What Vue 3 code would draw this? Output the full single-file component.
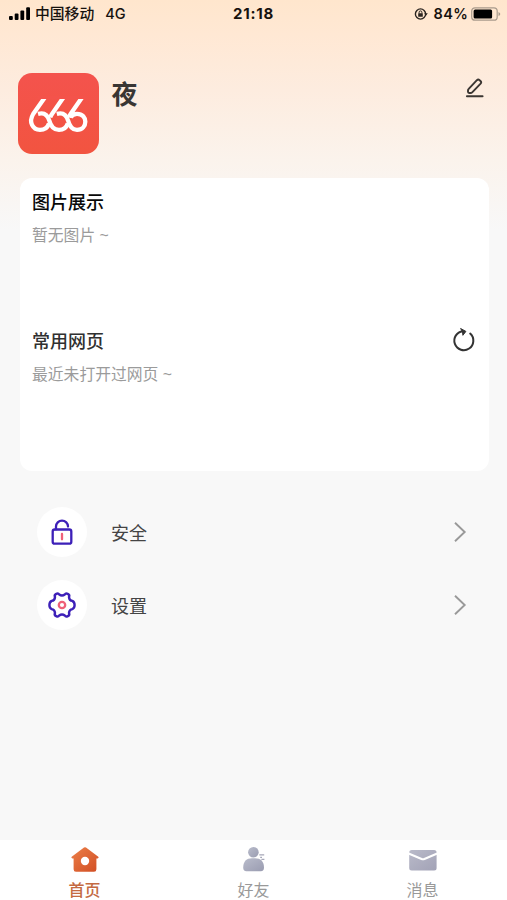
<template>
  <div class="page">
    <header class="status-bar">
      <div class="carrier">
        <svg class="signal" width="22" height="14" viewBox="0 0 22 14">
          <rect x="0" y="9" width="3.8" height="4" rx="1" />
          <rect x="5.7" y="6.5" width="3.8" height="6.5" rx="1" />
          <rect x="11.4" y="3.5" width="3.8" height="9.5" rx="1" />
          <rect x="17.2" y="0.3" width="3.8" height="12.7" rx="1" />
        </svg>
        <span>中国移动</span>
        <span class="network">4G</span>
      </div>
      <div class="clock">21:18</div>
      <div class="power">
        <svg width="14" height="14" viewBox="0 0 14 14">
          <circle cx="6.5" cy="7" r="5.1" fill="none" stroke="#2b2520" stroke-width="1.4" />
          <path d="M10.2 6.2h3.6l-1.8 2.6z" fill="#2b2520" />
          <rect x="4.2" y="6.3" width="4.6" height="3.5" rx=".5" fill="#2b2520" />
          <path d="M5.1 6.5V5.3a1.4 1.4 0 0 1 2.8 0v1.2" fill="none" stroke="#2b2520" />
        </svg>
        <span class="percent">84%</span>
        <svg width="30" height="15" viewBox="0 0 30 15">
          <rect x="0.7" y="0.8" width="25.5" height="12.4" rx="3.3" fill="none" stroke="#a99b8c" stroke-width="1.2" />
          <rect x="2.6" y="2.6" width="18.5" height="8.8" rx="1.5" />
          <path d="M27.5 4.9v4.2q1.8-.7 1.8-2.1t-1.8-2.1z" fill="#a99b8c" />
        </svg>
      </div>
    </header>

    <section class="profile">
      <svg class="avatar" width="81" height="81" viewBox="0 0 81 81">
        <defs>
          <linearGradient id="avatarBg" x1="0" y1="0" x2="0" y2="1">
            <stop offset="0" stop-color="#f4534d" />
            <stop offset="1" stop-color="#f25440" />
          </linearGradient>
        </defs>
        <rect width="81" height="81" rx="14" fill="url(#avatarBg)" />
        <g fill="none" stroke="#fff" stroke-width="4.3">
          <path d="M27 24.2L15.2 41C10.4 49 14.6 56.9 22 56.9C26.6 56.9 29.6 54.6 31 50.5" />
          <path d="M20 40.9C25.5 39.4 29.6 41.6 31.3 47.6C33 54 36 56.9 41 56.9C45.5 56.9 48.4 54.6 49.8 50.5" />
          <path d="M45.6 24.2L34 41Q32.6 43 32.2 44.6" />
          <path d="M38.8 40.9C44.3 39.4 48.4 41.6 50.1 47.6C51.8 54 54.6 56.9 59 56.9C70 56.9 70.2 40.8 59 40.8C56 40.8 53.8 42.2 52.5 44.6" />
          <path d="M64.2 24.2L52.6 41Q51.2 43 50.8 44.6" />
        </g>
        <path d="M20 23H68V26H20z" fill="#f4534b" />
      </svg>
      <h1 class="name">夜</h1>
      <svg class="edit" width="20" height="22" viewBox="0 0 20 22">
        <g fill="none" stroke="#3b3632" stroke-width="1.9" stroke-linejoin="round" stroke-linecap="round">
          <path d="M3.7 10.9L11.9 2.2Q13.2 1 14.6 2.2L15.5 3Q16.8 4.3 15.6 5.7L7.2 14.3Q6.5 15 5.5 15H4.1Q3 15 3 13.8V12.6Q3 11.6 3.7 10.9z" />
          <path d="M1.9 18.2H17.6" />
        </g>
      </svg>
    </section>

    <main class="card">
      <section class="block">
        <h2 class="title strong">图片展示</h2>
        <p class="empty">暂无图片 ~</p>
      </section>
      <section class="block">
        <h2 class="title">常用网页</h2>
        <p class="empty">最近未打开过网页 ~</p>
        <svg class="refresh" width="24" height="26" viewBox="0 0 24 26">
          <path d="M18.2 6.6A9.5 9.5 0 1 1 10.8 4.2" fill="none" stroke="#333" stroke-width="2" stroke-linecap="round" />
          <path d="M8.6 1.5L13.9 4.4L10.9 8.3L10.5 4.8z" fill="#333" stroke="#333" stroke-linejoin="round" />
        </svg>
      </section>
    </main>

    <ul class="menu">
      <li v-for="item in menu" :key="item.key" class="menu-item">
        <span class="menu-icon">
          <svg v-if="item.key === 'safe'" width="28" height="28" viewBox="0 0 28 28" fill="none" stroke-linecap="round">
            <rect x="4.7" y="11.5" width="18.6" height="14.2" rx="2" stroke="#3d20b8" stroke-width="2.3" />
            <path d="M8 11.3V8.6A6 6 0 0 1 20 8.6" stroke="#3d20b8" stroke-width="2.3" />
            <path d="M14 15.9v5.4" stroke="#ef6079" stroke-width="2.3" />
          </svg>
          <svg v-else width="28" height="28" viewBox="0 0 28 28" fill="none" stroke-linejoin="round">
            <path d="M8.2 2.9Q10.2 1.8 11.2 3.5Q14 5.6 16.8 3.5Q17.8 1.8 19.8 2.9Q22 4 21 6.1Q21.3 9.5 24.3 9.9Q26.6 11 26.6 14T24.3 18.1Q21.3 18.5 21 21.9Q22 24 19.8 25.1Q17.8 26.2 16.8 24.5Q14 22.4 11.2 24.5Q10.2 26.2 8.2 25.1Q6 24 7 21.9Q6.7 18.5 3.7 18.1Q1.4 17 1.4 14T3.7 9.9Q6.7 9.5 7 6.1Q6 4 8.2 2.9Z" stroke="#3d20b8" stroke-width="2.4" />
            <circle cx="14" cy="14" r="3.2" stroke="#ef6079" stroke-width="2.3" />
          </svg>
        </span>
        <span class="menu-label">{{ item.label }}</span>
        <svg class="arrow" width="14" height="22" viewBox="0 0 14 22">
          <path d="M2 1.7L11.7 11L2 20.3" fill="none" stroke="#999" stroke-width="1.9" />
        </svg>
      </li>
    </ul>

    <nav class="tabbar">
      <div v-for="tab in tabs" :key="tab.key" class="tab" :class="{ active: tab.key === current }">
        <svg v-if="tab.key === 'home'" width="30" height="28" viewBox="0 0 30 28">
          <defs>
            <linearGradient id="homeFill" x1="0" y1="0" x2="1" y2="1">
              <stop offset="0" stop-color="#ec8049" />
              <stop offset="1" stop-color="#d14e24" />
            </linearGradient>
          </defs>
          <path d="M14 2.5Q15 1.8 16 2.5L28.3 11.7Q29.4 13.1 27.5 13.4H26.4V24.2Q26.4 26.7 24 26.7H6Q3.6 26.7 3.6 24.2V13.4H2.5Q.6 13.1 1.7 11.7z" fill="url(#homeFill)" />
          <circle cx="15" cy="16" r="4.2" fill="#fff" />
        </svg>
        <svg v-else-if="tab.key === 'friend'" width="30" height="28" viewBox="0 0 30 28">
          <defs>
            <linearGradient id="friendFill" x1="0" y1="0" x2="1" y2="1">
              <stop offset="0" stop-color="#b9bccb" />
              <stop offset="1" stop-color="#9a9cb1" />
            </linearGradient>
          </defs>
          <g fill="url(#friendFill)">
            <circle cx="14.4" cy="7.2" r="5.3" />
            <path d="M4.2 22.8C4.2 16.2 7.5 13.2 13 13.2H16C21.5 13.2 25 16.2 25 22.8Q25 26.2 21.8 26.2H7.4Q4.2 26.2 4.2 22.8Z" />
          </g>
          <path d="M20.3 9.8H25.2M21.2 12.3H23M22.4 14.4H25.4" stroke="#a6a7b8" stroke-width="1.3" />
        </svg>
        <svg v-else width="30" height="28" viewBox="0 0 30 28">
          <defs>
            <linearGradient id="mailFill" x1="0" y1="0" x2="1" y2="1">
              <stop offset="0" stop-color="#b9bac9" />
              <stop offset="1" stop-color="#a2a2b6" />
            </linearGradient>
          </defs>
          <rect x="1.2" y="5" width="27.4" height="20.6" rx="2.5" fill="url(#mailFill)" />
          <path d="M.6 8.5L13.6 14Q15 14.6 16.4 14L29.2 8.5" fill="none" stroke="#fff" stroke-width="2.1" />
        </svg>
        <span class="tab-label">{{ tab.label }}</span>
      </div>
    </nav>
  </div>
</template>

<script setup>
import { ref } from 'vue'

const current = ref('home')

const menu = [
  { key: 'safe', label: '安全' },
  { key: 'setting', label: '设置' }
]

const tabs = [
  { key: 'home', label: '首页' },
  { key: 'friend', label: '好友' },
  { key: 'message', label: '消息' }
]
</script>

<style>
body { margin: 0; background: #f8f8f8; }
</style>

<style scoped>
.page { display: flex; flex-direction: column; height: 900px; overflow: hidden; background: linear-gradient(180deg, #ffe6cd 0, #ffe8d4 35px, #fdecdf 90px, #fbf3ec 160px, #f8f8f8 230px); font-family: "Liberation Sans", "Noto Sans CJK SC", sans-serif; color: #333; }
.page svg { display: block; flex: none; }
h1, h2, p, ul { margin: 0; padding: 0; }
.status-bar { display: grid; grid-template-columns: 1fr auto 1fr; align-items: center; height: 28px; padding: 0 6px 0 9px; font-family: Inter, "Noto Sans CJK SC", sans-serif; font-size: 15px; line-height: 28px; color: #16120e; }
.carrier { display: flex; align-items: center; font-weight: 500; }
.carrier span { font-size: 14.8px; }
.signal { margin-right: 4px; }
.carrier .network { margin-left: 11px; font-size: 14.5px; }
.clock { margin-left: -3px; font-weight: 700; font-size: 15px; letter-spacing: 0.8px; }
.power { display: flex; align-items: center; justify-content: flex-end; }
.percent { margin: 0 3px 0 6px; font-weight: 600; font-size: 14.5px; letter-spacing: 0.3px; }
.profile { display: flex; align-items: flex-start; height: 105px; padding: 45px 22px 0 18.4px; }
.name { flex: 1; margin: 2px 0 0 12px; font-size: 26px; line-height: 40px; font-weight: 700; color: #393633; }
.edit { margin-top: 5px; }
.card { box-sizing: border-box; height: 293px; margin: 0 18px 0 20px; padding: 12px 12px 0; border-radius: 12px; background: #fff; }
.block { position: relative; height: 139px; }
.title { font-size: 18px; line-height: 26px; font-weight: 500; color: #303030; }
.strong { color: #080808; }
.empty { margin-top: 8px; font-size: 15.8px; line-height: 24px; color: #9b9b9b; }
.refresh { position: absolute; right: 1px; top: -2px; }
.menu { list-style: none; margin-top: 36px; padding: 0 40px 0 37px; }
.menu-item { display: flex; align-items: center; height: 50px; margin-bottom: 23px; }
.menu-icon { display: flex; align-items: center; justify-content: center; width: 50px; height: 50px; border-radius: 50%; background: #fff; }
.menu-label { flex: 1; margin-left: 24px; font-size: 18px; color: #444; }
.tabbar { display: flex; height: 60px; margin-top: auto; background: #fff; }
.tab { display: flex; flex: 1; flex-direction: column; align-items: center; padding-top: 5px; }
.tab-label { margin-top: 6px; font-size: 16px; line-height: 24px; color: #999; }
.active .tab-label { color: #c46a42; font-weight: 500; }
</style>
